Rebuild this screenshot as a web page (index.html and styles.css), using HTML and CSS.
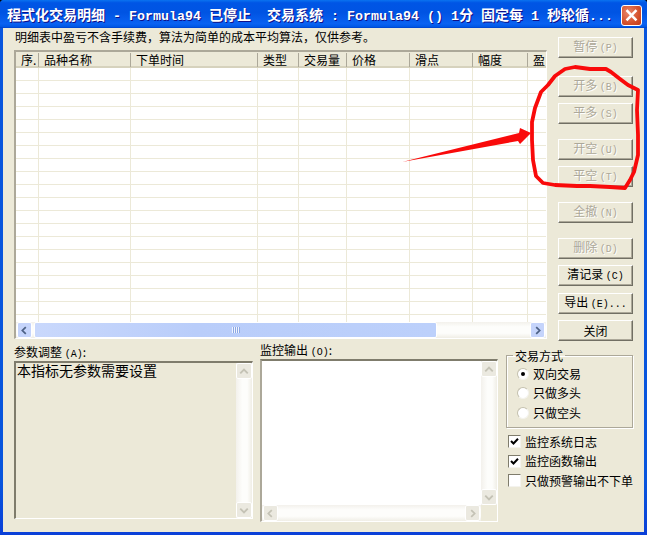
FILE: index.html
```html
<!DOCTYPE html>
<html lang="zh-CN">
<head>
<meta charset="utf-8">
<title>程式化交易明细</title>
<link rel="stylesheet" href="styles.css">
</head>
<body>
<div class="window">
  <header class="titlebar">
    <span class="title">程式化交易明细<i> - Formula94 </i>已停止<i>  </i>交易系统<i> : Formula94 () 1</i>分<i> </i>固定每<i> 1 </i>秒轮循<i>...</i></span>
    <span class="close" aria-label="关闭"><svg viewBox="0 0 21 21" width="19" height="19"><path d="M5 4.5 L16 16 M16 4.5 L5 16" stroke="#fff" stroke-width="2.8" fill="none"/></svg></span>
  </header>
  <main class="client">
    <section class="upper">
      <div class="upper-left">
        <p class="note">明细表中盈亏不含手续费，算法为简单的成本平均算法，仅供参考。</p>
        <div class="list sunken">
          <div class="cols head">
            <div>序.</div><div>品种名称</div><div>下单时间</div><div>类型</div><div>交易量</div><div>价格</div><div>滑点</div><div>幅度</div><div>盈</div>
          </div>
          <div class="cols rows">
            <div></div><div></div><div></div><div></div><div></div><div></div><div></div><div></div><div></div>
          </div>
          <div class="hscroll">
            <span class="sb-btn blue"><svg viewBox="0 0 15 15" width="15" height="15"><path d="M9 3.5 L5 7.5 L9 11.5" class="chev-dark"/></svg></span>
            <div class="track"><div class="thumb"><span class="grip"></span></div></div>
            <span class="sb-btn blue"><svg viewBox="0 0 15 15" width="15" height="15"><path d="M6 3.5 L10 7.5 L6 11.5" class="chev-dark"/></svg></span>
          </div>
        </div>
      </div>
      <div class="buttons">
        <button class="btn off">暂停 <span class="m">(P)</span></button>
        <button class="btn off gap-18">开多 <span class="m">(B)</span></button>
        <button class="btn off">平多 <span class="m">(S)</span></button>
        <button class="btn off gap-15">开空 <span class="m">(U)</span></button>
        <button class="btn off">平空 <span class="m">(T)</span></button>
        <button class="btn off gap-15">全撤 <span class="m">(N)</span></button>
        <button class="btn off gap-15">删除 <span class="m">(D)</span></button>
        <button class="btn">清记录 <span class="m">(C)</span></button>
        <button class="btn gap-7">导出 <span class="m">(E)...</span></button>
        <button class="btn">关闭</button>
      </div>
    </section>
    <section class="lower">
      <div class="params">
        <label class="field-label">参数调整 <span class="m">(A)</span>:</label>
        <div class="box sunken tan">
          <div class="box-text">本指标无参数需要设置</div>
          <div class="vscroll">
            <span class="sb-btn pale"><svg viewBox="0 0 15 15" width="15" height="15"><path d="M3.5 9.5 L7.5 5.5 L11.5 9.5" class="chev"/></svg></span>
            <span class="sb-btn pale"><svg viewBox="0 0 15 15" width="15" height="15"><path d="M3.5 5.5 L7.5 9.5 L11.5 5.5" class="chev"/></svg></span>
          </div>
        </div>
      </div>
      <div class="monitor">
        <label class="field-label">监控输出 <span class="m">(O)</span>:</label>
        <div class="box sunken mon">
          <div class="mon-top">
            <div class="box-text"></div>
            <div class="vscroll">
              <span class="sb-btn pale"><svg viewBox="0 0 15 15" width="15" height="15"><path d="M3.5 9.5 L7.5 5.5 L11.5 9.5" class="chev"/></svg></span>
              <span class="sb-btn pale"><svg viewBox="0 0 15 15" width="15" height="15"><path d="M3.5 5.5 L7.5 9.5 L11.5 5.5" class="chev"/></svg></span>
            </div>
          </div>
          <div class="mon-bottom">
            <div class="hscroll plain">
              <span class="sb-btn pale"><svg viewBox="0 0 15 15" width="15" height="15"><path d="M9 3.5 L5 7.5 L9 11.5" class="chev"/></svg></span>
              <span class="sb-btn pale"><svg viewBox="0 0 15 15" width="15" height="15"><path d="M6 3.5 L10 7.5 L6 11.5" class="chev"/></svg></span>
            </div>
            <div class="corner"></div>
          </div>
        </div>
      </div>
      <div class="options">
        <fieldset class="group">
          <legend>交易方式</legend>
          <div class="radio"><span class="dot on"></span>双向交易</div>
          <div class="radio"><span class="dot"></span>只做多头</div>
          <div class="radio"><span class="dot"></span>只做空头</div>
        </fieldset>
        <div class="check"><span class="tick on"><svg viewBox="0 0 11 11" width="11" height="11"><path d="M2 5 L4.5 7.5 L9 2.8" stroke="#000" stroke-width="2" fill="none"/></svg></span>监控系统日志</div>
        <div class="check"><span class="tick on"><svg viewBox="0 0 11 11" width="11" height="11"><path d="M2 5 L4.5 7.5 L9 2.8" stroke="#000" stroke-width="2" fill="none"/></svg></span>监控函数输出</div>
        <div class="check"><span class="tick"></span>只做预警输出不下单</div>
      </div>
    </section>
  </main>
  <svg class="markup" viewBox="0 0 647 535" width="647" height="535" aria-hidden="true">
    <path d="M565 69 L575 67 L590 69 L606 69 L611 72 L620 79 L628 85 L638 90 L637 110 L638 135 L638 155 L634 172 L630 180 L625 188 L610 187 L590 186 L577 186 L555 185 L543 183 L536 176 L533 160 L532 140 L532 122 L535 108 L538 100 L541 92 L548 85 L555 76 Z" class="loop"/>
    <polygon points="402,162 519,133 520,128 531,133 520,144 518,141" class="arrow"/>
  </svg>
</div>
</body>
</html>
```
FILE: styles.css
```css
* { box-sizing: border-box; }
html, body { margin: 0; padding: 0; background: #000; }
body {
  width: 647px;
  height: 535px;
  overflow: hidden;
  font: 12px/14px "Noto Sans CJK SC", "Liberation Sans", sans-serif;
  color: #000;
}
.window {
  position: relative;
  width: 647px;
  height: 535px;
  display: flex;
  flex-direction: column;
  background: linear-gradient(#0855dd 90%, #0a3fd8);
  border-radius: 4px 4px 0 0;
  overflow: hidden;
}
.titlebar {
  height: 28px;
  flex: none;
  display: flex;
  align-items: flex-start;
  justify-content: space-between;
  padding: 5px 5px 0 7px;
  background: linear-gradient(#0a73f0 0, #0055e5 10%, #0054e3 45%, #0a62f2 85%, #0058e6 95%, #0040c8 100%);
}
.title {
  color: #fff;
  font: bold 14px/18px "Noto Sans CJK SC", sans-serif;
  white-space: pre;
  text-shadow: 1px 1px 0 #0f1089;
}
.title i {
  font: bold 13.333px/18px "Liberation Mono", monospace;
}
.close {
  width: 21px;
  height: 21px;
  border-radius: 3px;
  border: 1px solid #fff;
  background: radial-gradient(circle at 35% 35%, #e9886d, #d4512c 60%, #c23a1a);
  display: flex;
  align-items: center;
  justify-content: center;
}
.close svg { flex: none; }
.client {
  flex: 1;
  margin: 0 3px 3px;
  padding: 2px 0 0 11px;
  background: #ece9d8;
  display: flex;
  flex-direction: column;
}
.upper { display: flex; height: 311px; flex: none; }
.upper-left { width: 533px; flex: none; }
.note { margin: 0 0 6px; height: 14px; padding-left: 1px; white-space: nowrap; }
.sunken {
  border-style: solid;
  border-width: 2px 1px 1px 2px;
  border-color: #aca899 #fff #fff #aca899;
}
.list {
  height: 289px;
  display: flex;
  flex-direction: column;
  background: #fff;
  overflow: hidden;
}
.cols {
  display: grid;
  grid-template-columns: 23px 92px 127px 41px 48px 63px 63px 55px 18px;
}
.head {
  height: 16px;
  flex: none;
  background: #ece9d8;
  box-shadow: inset 0 -2px 0 #d6d2bd;
}
.head > div {
  height: 14px;
  line-height: 14px;
  padding-left: 5px;
  white-space: nowrap;
  border-right: 1px solid #aca899;
  margin-top: 1px;
}
.head > div:last-child { border-right: 0; }
.rows {
  height: 254px;
  flex: none;
  background: repeating-linear-gradient(#fff 0, #fff 12px, #ece9d8 12px, #ece9d8 13px);
}
.rows > div { border-right: 1px solid #ece9d8; }
.rows > div:last-child { border-right: 0; }
.hscroll {
  height: 16px;
  flex: none;
  display: flex;
  justify-content: space-between;
  padding: 0 1px;
  background: linear-gradient(#f3f1ec, #fdfdfb 30%, #fdfdfb 70%, #f0eee6);
}
.track { flex: 1; padding: 0 0 0 2px; }
.thumb {
  width: 403px;
  height: 16px;
  border: 1px solid #fff;
  border-radius: 2px;
  background: linear-gradient(90deg, #c9d8fc, #b9cdfa 40%, #bcd0fb);
  display: flex;
  align-items: center;
  justify-content: center;
}
.grip {
  width: 8px;
  height: 6px;
  background: repeating-linear-gradient(90deg, #f0f4fe 0, #f0f4fe 1px, #8ca8e4 1px, #8ca8e4 2px);
}
.sb-btn {
  width: 15px;
  height: 16px;
  flex: none;
  display: flex;
  align-items: center;
  justify-content: center;
  border: 1px solid #fff;
  border-radius: 2px;
}
.sb-btn.blue { background: #c5d4fb; }
.sb-btn.pale { background: #ebe9e0; }
.chev { fill: none; stroke: #c4c2b5; stroke-width: 2; }
.chev-dark { fill: none; stroke: #4d6185; stroke-width: 2; }
.lower { display: flex; flex: 1; }
.params { width: 239px; padding-top: 4px; flex: none; }
.monitor { width: 238px; margin-left: 7px; padding-top: 2px; flex: none; }
.options { width: 127px; margin-left: 8px; flex: none; padding-top: 8px; }
.field-label { display: block; height: 13px; line-height: 13px; margin-bottom: 3px; white-space: nowrap; }
.box { display: flex; background: #fff; }
.box.tan { background: #ece9d8; height: 158px; border-color: #7f7c6c #fff #fff #7f7c6c; }
.box.mon { height: 163px; flex-direction: column; border-color: #7f7c6c #fff #fff #aca899; }
.box-text {
  flex: 1;
  font-size: 14px;
  line-height: 16px;
  white-space: nowrap;
  margin-top: -1px;
  padding-left: 1px;
}
.vscroll {
  width: 16px;
  flex: none;
  display: flex;
  flex-direction: column;
  justify-content: space-between;
  background: linear-gradient(90deg, #f3f1ec, #fdfdfb 40%, #fdfdfb 70%, #f0eee6);
}
.vscroll .sb-btn { width: 16px; height: 16px; }
.mon-top { flex: 1; display: flex; min-height: 0; }
.mon-bottom { height: 16px; flex: none; display: flex; }
.hscroll.plain { flex: 1; }
.corner { width: 16px; background: #ece9d8; }
.group {
  margin: 0;
  padding: 2px 0 0;
  height: 79px;
  border: 1px solid #aca899;
  box-shadow: 1px 1px 0 #fff, inset 1px 1px 0 #fff;
  min-width: 0;
}
.group legend { margin-left: 6px; padding: 0 2px; line-height: 13px; height: 13px; }
.radio { display: flex; align-items: center; height: 19.5px; gap: 4px; margin-left: 10px; }
.dot {
  width: 12px;
  height: 12px;
  border-radius: 50%;
  background: #fff;
  border: 1px solid #c4c1ae;
  border-right-color: #f4f3ee;
  border-bottom-color: #f4f3ee;
  display: flex;
  align-items: center;
  justify-content: center;
  flex: none;
}
.dot.on::after { content: ""; width: 4px; height: 4px; border-radius: 50%; background: #000; }
.check { display: flex; align-items: center; height: 19.5px; gap: 4px; margin-left: 2px; white-space: nowrap; }
.group + .check { margin-top: 4px; }
.tick {
  width: 13px;
  height: 13px;
  flex: none;
  background: #fff;
  border: 1px solid;
  border-color: #7f7c6c #f4f3ee #f4f3ee #7f7c6c;
  display: flex;
  align-items: center;
  justify-content: center;
}
.buttons {
  width: 75px;
  margin-left: 11px;
  padding-top: 7px;
  display: flex;
  flex-direction: column;
  gap: 6px;
  flex: none;
}
.btn {
  width: 75px;
  height: 21px;
  flex: none;
  padding: 0;
  font: inherit;
  color: #000;
  background: #ece9d8;
  border-style: solid;
  border-width: 1px;
  border-color: #fff #716f64 #716f64 #fff;
  box-shadow: inset -1px -1px 0 #aca899;
  white-space: pre;
}
.btn.off { color: #aca899; text-shadow: 1px 1px 0 #fff; }
.gap-18 { margin-top: 12px; }
.gap-15 { margin-top: 9px; }
.gap-7 { margin-top: 1px; }
.m { font: 10px/14px "Liberation Mono", monospace; }
.markup { position: absolute; left: 0; top: 0; pointer-events: none; }
.loop { fill: none; stroke: #f90a0a; stroke-width: 3.8; stroke-linejoin: round; }
.arrow { fill: #f90a0a; }
```
